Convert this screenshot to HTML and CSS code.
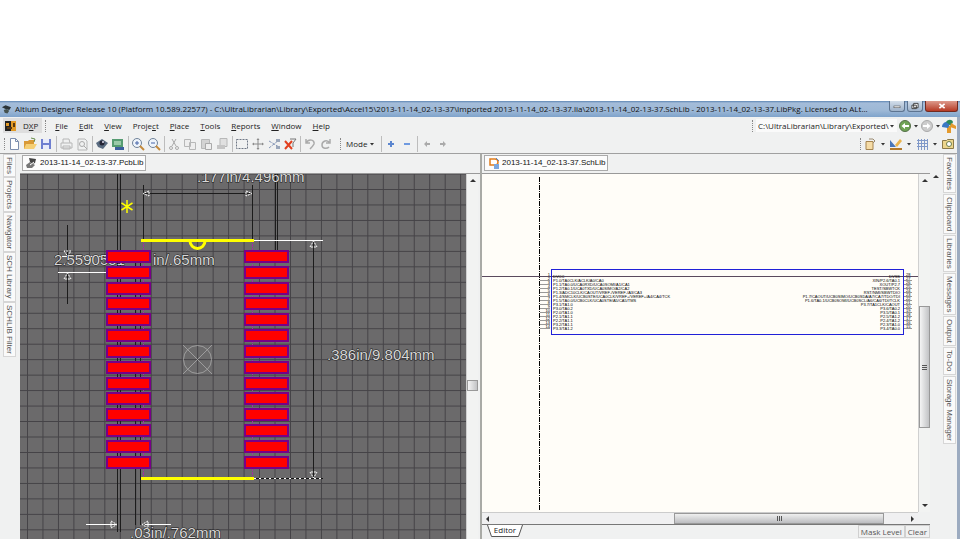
FILE: index.html
```
<!DOCTYPE html>
<html lang="en">
<head>
<meta charset="utf-8">
<title>Altium Designer Release 10</title>
<link rel="stylesheet" href="styles.css">
</head>
<body>
<svg class="defs" width="0" height="0" aria-hidden="true">
  <symbol id="caret" viewBox="0 0 6 6"><path d="M1 2h4L3 4.500z" fill="#333"/></symbol>
</svg>
<div class="window">
  <header class="titlebar">
    <svg class="appicon" viewBox="0 0 12 12"><path d="M1 4l4-2 6 2-2 3-4-1z" fill="#2c3438"/><path d="M3 7l3-1 3 2-2 3-3-1z" fill="#45524f"/></svg>
    <h1>Altium Designer Release 10 (Platform 10.589.22577) - C:\UltraLibrarian\Library\Exported\Accel15\2013-11-14_02-13-37\Imported 2013-11-14_02-13-37.lia\2013-11-14_02-13-37.SchLib - 2013-11-14_02-13-37.LibPkg. Licensed to ALt...</h1>
    <div class="controls">
      <button class="ctl" aria-label="Minimize"><svg viewBox="0 0 16 11"><rect x="4.500" y="5.500" width="7" height="2" fill="#fff" stroke="#444" stroke-width=".6"/></svg></button>
      <button class="ctl" aria-label="Restore"><svg viewBox="0 0 16 11"><path d="M6.500 2.500h5v5h-5zM4.500 4.500h5v4h-5z" fill="#fff" stroke="#333"/></svg></button>
      <button class="ctl close" aria-label="Close"><svg viewBox="0 0 16 11"><path d="M5 3l6 5M11 3L5 8" stroke="#fff" stroke-width="2"/></svg></button>
    </div>
  </header>
  <div class="frame">
    <div class="bars">
      <nav class="menubar">
        <button class="dxp"><svg viewBox="0 0 12 12"><path d="M0 1h6v10H0z" fill="#222"/><path d="M1 3h3v3H1zM6 1h5v10H6z" fill="#e29a26"/><path d="M2 7h5v2H2zM8 3h2v4H8z" fill="#5b3a10"/></svg><span>D<u>X</u>P</span></button>
        <i class="grip"></i>
        <button><u>F</u>ile</button><button><u>E</u>dit</button><button><u>V</u>iew</button><button>Proje<u>c</u>t</button><button><u>P</u>lace</button><button><u>T</u>ools</button><button><u>R</u>eports</button><button><u>W</u>indow</button><button><u>H</u>elp</button>
        <span class="space"></span>
        <i class="grip"></i>
        <label class="path"><select aria-label="Address"><option>C:\UltraLibrarian\Library\Exported\</option></select><svg class="car"><use href="#caret"/></svg></label>
        <button class="tool" aria-label="Back"><svg viewBox="0 0 14 14"><circle cx="7" cy="7" r="5.500" fill="#6fa355" stroke="#55704a"/><path d="M11 6v2H7v2L3.500 7 7 4v2z" fill="#fff"/></svg></button><svg class="car"><use href="#caret"/></svg>
        <button class="tool" aria-label="Forward"><svg viewBox="0 0 14 14"><circle cx="7" cy="7" r="5.500" fill="#ccc" stroke="#aaa"/><path d="M3 6v2h4v2l3.500-3L7 4v2z" fill="#fff"/></svg></button><svg class="car"><use href="#caret"/></svg>
        <button class="tool" aria-label="Home"><svg viewBox="0 0 14 14"><path d="M5 7h4v7H5z" fill="#e59a2c"/><path d="M0 8c0-3 2-5 5-5l3 2-2 4z" fill="#3b78c4"/><path d="M4 3c2-3 6-3 7 0L9 7z" fill="#2e8a5a"/><path d="M9 4l5 3v3l-6-2z" fill="#e59a2c"/></svg></button>
      </nav>
      <div class="toolbar">
        <i class="grip"></i>
        <button class="tool" aria-label="New"><svg viewBox="0 0 14 14"><path d="M3.500 1.500h5l3 3v8h-8z" fill="#fff" stroke="#7c8eae"/><path d="M8.500 1.500v3h3" fill="none" stroke="#7c8eae"/></svg></button>
        <button class="tool" aria-label="Open"><svg viewBox="0 0 14 14"><path d="M1 4h4l1-1h5v9H1z" fill="#d99a37"/><path d="M3 7h11l-3 5H1z" fill="#f5cf75"/><path d="M8 1l4 1-1 3" fill="none" stroke="#6a8f4b"/></svg></button>
        <button class="tool" aria-label="Save"><svg viewBox="0 0 14 14"><path d="M2 2h10v10H2z" fill="#6f7fd0"/><path d="M4 2h6v4H4zM4 8h6v4H4z" fill="#e8ebfa"/></svg></button>
        <i class="sep"></i>
        <button class="tool off" aria-label="Print"><svg viewBox="0 0 14 14"><path d="M4 6V2h6l1 4M2 6h11v5H2zM4 9h7v3H4z" fill="none" stroke="#aaa"/></svg></button>
        <button class="tool off" aria-label="Preview"><svg viewBox="0 0 14 14"><path d="M3 2h7l2 2v9H3z" fill="none" stroke="#aaa"/><circle cx="7" cy="7" r="2.500" fill="none" stroke="#999"/><path d="M9 9l3 3" stroke="#999"/></svg></button>
        <i class="sep"></i>
        <button class="tool" aria-label="View devices"><svg viewBox="0 0 14 14"><path d="M1 6l6-4 6 4-5 6-5-2z" fill="#596b80"/><circle cx="7" cy="6" r="2.500" fill="#223"/><circle cx="8" cy="5" r="1" fill="#dde"/></svg></button>
        <button class="tool" aria-label="Board"><svg viewBox="0 0 14 14"><path d="M1 2h11v8H1z" fill="#569c72"/><path d="M3 4h7v4H3z" fill="#9acaa9"/><path d="M4 10h9v3H4z" fill="#3b5f9e"/></svg></button>
        <i class="sep"></i>
        <button class="tool" aria-label="Zoom in"><svg viewBox="0 0 14 14"><circle cx="6" cy="6" r="4.500" fill="#eef4fb" stroke="#6f8299"/><path d="M4 6h4M6 4v4" stroke="#4665a8"/><path d="M9 9l4 4" stroke="#c48a3c" stroke-width="2"/></svg></button>
        <button class="tool" aria-label="Zoom out"><svg viewBox="0 0 14 14"><circle cx="6" cy="6" r="4.500" fill="#eef4fb" stroke="#6f8299"/><path d="M4 6h4" stroke="#4665a8"/><path d="M9 9l4 4" stroke="#c48a3c" stroke-width="2"/></svg></button>
        <i class="sep"></i>
        <button class="tool off" aria-label="Cut"><svg viewBox="0 0 14 14"><path d="M5 2l4 7M9 2L5 9" stroke="#999"/><circle cx="4" cy="11" r="1.500" fill="none" stroke="#999"/><circle cx="10" cy="11" r="1.500" fill="none" stroke="#999"/></svg></button>
        <button class="tool off" aria-label="Copy"><svg viewBox="0 0 14 14"><path d="M1.500 2.500h6v7h-6zM6.500 5.500h6v7h-6z" fill="#eee" stroke="#aaa"/></svg></button>
        <button class="tool off" aria-label="Paste"><svg viewBox="0 0 14 14"><path d="M2.500 2.500h8v9h-8z" fill="#ccc" stroke="#aaa"/><path d="M6.500 6.500h6v6h-6z" fill="#eee" stroke="#999"/></svg></button>
        <button class="tool off" aria-label="Rubber stamp"><svg viewBox="0 0 14 14"><path d="M5 1.500h7v8H5z" fill="#ddd" stroke="#aaa"/><path d="M2 8h8v4H2z" fill="#bbb"/></svg></button>
        <i class="sep"></i>
        <button class="tool" aria-label="Select area"><svg viewBox="0 0 14 14"><path d="M1.500 2.500h11v9h-11z" fill="none" stroke="#6f7785" stroke-dasharray="2 1"/></svg></button>
        <button class="tool" aria-label="Move"><svg viewBox="0 0 14 14"><path d="M7 2v10M2 7h10" stroke="#8a8a8a"/><path d="M7 1l1.500 2h-3zM7 13l1.500-2h-3zM1 7l2-1.500v3zM13 7l-2-1.500v3z" fill="#8a8a8a"/></svg></button>
        <button class="tool" aria-label="Deselect"><svg viewBox="0 0 14 14"><path d="M2 4l10 6M2 11l10-8" stroke="#8798b8" stroke-dasharray="3 1"/><path d="M9 2h4v3H9zM9 9h4v3H9z" fill="#9aa6ba"/></svg></button>
        <button class="tool" aria-label="Clear filter"><svg viewBox="0 0 14 14"><path d="M2 4l7 8M9 4l-7 8" stroke="#e2401f" stroke-width="2"/><path d="M7 2h6L10 6v4" fill="none" stroke="#777"/></svg></button>
        <i class="sep"></i>
        <button class="tool off" aria-label="Undo"><svg viewBox="0 0 14 14"><path d="M3 2v4h4M3 6c3-5 9-3 8 1-1 2-2 3-4 5" fill="none" stroke="#999" stroke-width="1.500"/></svg></button>
        <button class="tool off" aria-label="Redo"><svg viewBox="0 0 14 14"><path d="M11 2v4H7M11 6C8 2 3 4 3 8s5 4 7 2" fill="none" stroke="#999" stroke-width="1.500"/></svg></button>
        <i class="grip"></i>
        <button class="mode">Mode<svg class="car"><use href="#caret"/></svg></button>
        <i class="sep"></i>
        <button class="tool" aria-label="Add"><svg viewBox="0 0 14 14"><path d="M7 4v6M4 7h6" stroke="#5b86cf" stroke-width="2"/></svg></button>
        <button class="tool" aria-label="Remove"><svg viewBox="0 0 14 14"><path d="M4 7h6" stroke="#6f9ae0" stroke-width="2"/></svg></button>
        <i class="sep"></i>
        <button class="tool" aria-label="Previous"><svg viewBox="0 0 14 14"><path d="M4 7l3-3v2h3v2H7v2z" fill="#aaa"/></svg></button>
        <button class="tool" aria-label="Next"><svg viewBox="0 0 14 14"><path d="M10 7L7 4v2H4v2h3v2z" fill="#aaa"/></svg></button>
        <span class="space"></span>
        <i class="grip"></i>
        <button class="tool" aria-label="Place part"><svg viewBox="0 0 14 14"><path d="M3 4.500h7v8H3z" fill="#f6dca6" stroke="#a58450"/><path d="M6 2h4l2 2-2 2" fill="none" stroke="#9a8a70"/></svg></button><svg class="car"><use href="#caret"/></svg>
        <button class="tool" aria-label="Draw"><svg viewBox="0 0 14 14"><path d="M1 3l6 7H1z" fill="#4876b8"/><path d="M6 8l5-6 2 2-5 6z" fill="#e9b44d"/><path d="M1 12h12" stroke="#b37a2a" stroke-width="2"/></svg></button><svg class="car"><use href="#caret"/></svg>
        <button class="tool" aria-label="Grid"><svg viewBox="0 0 14 14"><path d="M2 3.500h11M2 6.500h11M2 9.500h11M3.500 2v11M6.500 2v11M9.500 2v11M12.500 2v11" stroke="#7f98c8"/></svg></button><svg class="car"><use href="#caret"/></svg>
        <button class="tool" aria-label="Model manager"><svg viewBox="0 0 14 14"><path d="M1.500 3.500h4l1-1h6v9h-11z" fill="#ecd58c" stroke="#8c7a48"/><circle cx="8" cy="7" r="2.500" fill="#fff" stroke="#6b7d4a"/></svg></button>
      </div>
    </div>
    <main class="workspace">
      <aside class="dock left">
        <button>Files</button><button>Projects</button><button>Navigator</button><button>SCH Library</button><button>SCHLIB Filter</button>
      </aside>
      <section class="doc pcbdoc">
        <div class="tabs"><button class="tab"><svg viewBox="0 0 12 12"><path d="M3 1l7 1-1 4-3 1-2-2z" fill="#444"/><path d="M0 8l4-3 5 3-3 3H1z" fill="#777"/><path d="M4 8l4-3" stroke="#fff"/></svg>2013-11-14_02-13-37.PcbLib</button></div>
        <div class="view">
          <svg class="pcb" viewBox="20 174 446 365" preserveAspectRatio="xMinYMin slice" role="img" aria-label="Footprint">
            <defs>
              <pattern id="grid" x="27" y="189" width="15.470" height="15.470" patternUnits="userSpaceOnUse"><path d="M.5 0v15.500M0 .5h15.500" stroke="#444246"/></pattern>
              <g id="pads"><path d="M1 1h43v11H1zM1 17h43v11H1zM1 33h43v11H1zM1 48h43v11H1zM1 64h43v11H1zM1 80h43v11H1zM1 96h43v11H1zM1 112h43v11H1zM1 128h43v11H1zM1 143h43v11H1zM1 159h43v11H1zM1 175h43v11H1zM1 191h43v11H1zM1 207h43v11H1z" fill="#f00" stroke="#780088" stroke-width="2"/></g>
            </defs>
            <rect x="20" y="174" width="1000" height="800" fill="#6b6a6b"/>
            <rect x="20" y="174" width="1000" height="800" fill="url(#grid)"/>
            <path d="M117.500 174v358M120.500 174v358M135.500 250v275M140.500 250v275M143.500 185v55M252.500 185v55M275.500 174v76M277.500 174v76M67.500 225v32M67.500 273v31M313.500 241v236M143 193.500h109" stroke="#1c1c1c" fill="none"/>
            <path d="M143.500 240v238M252.500 240v238" stroke="#a030a0" stroke-dasharray="3 1"/>
            <path d="M254 240.500h69M58 272.500h48M86 524.500h30M145 524.500h26" stroke="#fff"/>
            <path d="M62 256.500h44" stroke="#fff" stroke-dasharray="5 2"/>
            <path d="M254 478.500h69" stroke="#111"/><path d="M254 478.500h69" stroke="#fff" stroke-dasharray="2 3"/>
            <path d="M149 191l-6 2.500 6 2.500zM246 191l6 2.500-6 2.500zM64 251l3.500 5 3.500-5zM64 279l3.500-6 3.500 6zM310 247l3.500-6 3.500 6zM310 472l3.500 6 3.500-6zM111 521l6 3.500-6 3.500zM148 521l-6 3.500 6 3.500z" fill="none" stroke="#fff" stroke-dasharray="2 1"/>
            <g class="dims">
              <text x="197" y="182">.177in/4.496mm</text>
              <text x="54" y="265">2.5590551</text>
              <text x="153" y="265">in/.65mm</text>
              <text x="327" y="360">.386in/9.804mm</text>
              <text x="130" y="538">.03in/.762mm</text>
            </g>
            <use href="#pads" x="106" y="250"/><use href="#pads" x="244" y="250"/>
            <path d="M141 240.500h113M141 478.500h113M190 241a7 7 0 0 0 15 0" stroke="#ff0" stroke-width="3" fill="none"/>
            <path d="M127 200v13M121.500 203l11 7M132.500 203l-11 7" stroke="#ff0" stroke-width="1.500"/>
            <path d="M183 345l29 29M212 345l-29 29" stroke="#aaa" stroke-width=".8"/><circle cx="197.500" cy="359.500" r="14" fill="none" stroke="#aaa" stroke-width=".8"/>
          </svg>
          <div class="vscroll"><i class="up"></i><i class="thumb"></i></div>
        </div>
      </section>
      <section class="doc schdoc">
        <div class="tabs"><button class="tab"><svg viewBox="0 0 12 12"><path d="M2 2h5a3 3 0 0 1 0 6H2z" fill="#fff" stroke="#e07c1c" stroke-width="1.500"/><path d="M6 7h5v5H6z" fill="#7ba6dd"/><path d="M8 1l3 3" stroke="#5a86c4"/></svg>2013-11-14_02-13-37.SchLib</button></div>
        <div class="view">
          <svg class="sch" viewBox="482 174 437 338" preserveAspectRatio="xMinYMin slice" role="img" aria-label="Symbol">
            <path d="M539.500 177v334" stroke="#000" stroke-dasharray="5 1 1 1"/>
            <path d="M482 276.500h437" stroke="#5a4a5e"/>
            <rect x="551.500" y="269.500" width="352" height="65" fill="none" stroke="#2020d8"/>
            <path d="M540 280.500h10M540 284.500h10M540 288.500h10M540 292.500h10M540 296.500h10M540 300.500h10M540 304.500h10M540 308.500h10M540 312.500h10M540 316.500h10M540 320.500h10M540 324.500h10M540 328.500h10M904 280.500h8M904 284.500h8M904 288.500h8M904 292.500h8M904 296.500h8M904 300.500h8M904 304.500h8M904 308.500h8M904 312.500h8M904 316.500h8M904 320.500h8M904 324.500h8M904 328.500h8" stroke="#555" stroke-width=".6"/>
            <g class="pins">
              <text x="553" y="278">DVCC</text><text x="553" y="282">P1.0/TA0CLK/ACLK/A0/CA0</text><text x="553" y="286">P1.1/TA0.0/UCA0RXD/UCA0SOMI/A1/CA1</text><text x="553" y="290">P1.2/TA0.1/UCA0TXD/UCA0SIMO/A2/CA2</text><text x="553" y="294">P1.3/ADC10CLK/CAOUT/VREF-/VEREF-/A3/CA3</text><text x="553" y="298">P1.4/SMCLK/UCB0STE/UCA0CLK/VREF+/VEREF+/A4/CA4/TCK</text><text x="553" y="302">P1.5/TA0.0/UCB0CLK/UCA0STE/A5/CA5/TMS</text><text x="553" y="306">P3.1/TA1.0</text><text x="553" y="310">P3.0/TA0.2</text><text x="553" y="314">P2.0/TA1.0</text><text x="553" y="318">P2.1/TA1.1</text><text x="553" y="322">P2.2/TA1.1</text><text x="553" y="326">P3.2/TA1.1</text><text x="553" y="330">P3.3/TA1.2</text>
            </g>
            <g class="pins end">
              <text x="900" y="278">DVSS</text><text x="900" y="282">XIN/P2.6/TA0.1</text><text x="900" y="286">XOUT/P2.7</text><text x="900" y="290">TEST/SBWTCK</text><text x="900" y="294">RST/NMI/SBWTDIO</text><text x="900" y="298">P1.7/CAOUT/UCB0SIMO/UCB0SDA/A7/CA7/TDO/TDI</text><text x="900" y="302">P1.6/TA0.1/UCB0SOMI/UCB0SCL/A6/CA6/TDI/TCLK</text><text x="900" y="306">P3.7/TA1CLK/CAOUT</text><text x="900" y="310">P3.6/TA0.2</text><text x="900" y="314">P3.5/TA0.1</text><text x="900" y="318">P2.5/TA1.2</text><text x="900" y="322">P2.4/TA1.2</text><text x="900" y="326">P2.3/TA1.0</text><text x="900" y="330">P3.4/TA0.0</text>
            </g>
            <g class="pins end">
              <text x="550" y="276">1</text><text x="550" y="280">2</text><text x="550" y="284">3</text><text x="550" y="288">4</text><text x="550" y="292">5</text><text x="550" y="296">6</text><text x="550" y="300">7</text><text x="550" y="304">8</text><text x="550" y="308">9</text><text x="550" y="312">10</text><text x="550" y="316">11</text><text x="550" y="320">12</text><text x="550" y="324">13</text><text x="550" y="328">14</text>
            </g>
            <g class="pins">
              <text x="906" y="276">28</text><text x="906" y="280">27</text><text x="906" y="284">26</text><text x="906" y="288">25</text><text x="906" y="292">24</text><text x="906" y="296">23</text><text x="906" y="300">22</text><text x="906" y="304">21</text><text x="906" y="308">20</text><text x="906" y="312">19</text><text x="906" y="316">18</text><text x="906" y="320">17</text><text x="906" y="324">16</text><text x="906" y="328">15</text>
            </g>
          </svg>
          <div class="vscroll"><i class="up"></i><i class="thumb"></i><i class="down"></i></div>
        </div>
        <div class="hscroll"><i class="lt"></i><i class="thumb"></i><i class="rt"></i></div>
        <footer class="status">
          <button class="editor"><svg viewBox="0 0 36 12" preserveAspectRatio="none"><path d="M.5 0l4 11.500h27L35.500 0" fill="#fff" stroke="#555"/></svg><span>Editor</span></button>
          <span class="space"></span>
          <button class="flat">Mask Level</button><button class="flat">Clear</button>
        </footer>
      </section>
      <div class="strip"><i class="up"></i></div>
      <aside class="dock right">
        <button>Favorites</button><button>Clipboard</button><button>Libraries</button><button>Messages</button><button>Output</button><button>To-Do</button><button>Storage Manager</button>
      </aside>
    </main>
  </div>
</div>
</body>
</html>
```
FILE: styles.css
```
* { box-sizing: border-box; }
body {
  margin: 0;
  background: #fff;
  color: #222;
  font: 8px/10px "Open Sans", "Liberation Sans", sans-serif;
}
button, select {
  font: inherit;
  color: inherit;
  background: none;
  border: 0;
  padding: 0;
  margin: 0;
}
.defs { position: absolute; }
.window {
  height: 100vh;
  padding-top: 101px;
  display: flex;
  flex-direction: column;
}
.space { flex: 1; }

.titlebar {
  flex: none;
  height: 16px;
  display: flex;
  align-items: center;
  padding-left: 1px;
  background: linear-gradient(#5d86b4 0, #a4bcd9 2px, #9db8d6 60%, #7fa3cb);
}
.appicon { width: 11px; height: 12px; margin-right: 3px; flex: none; }
.titlebar h1 {
  flex: 1;
  min-width: 0;
  margin: 0;
  font: 8px/14px "Open Sans", "Liberation Sans", sans-serif;
  color: #111;
  white-space: nowrap;
}
.controls { display: flex; gap: 2px; align-self: flex-start; padding-right: 2px; }
.ctl {
  width: 16px;
  height: 11px;
  border: 1px solid #5d7490;
  border-top: 0;
  border-radius: 0 0 3px 3px;
  background: linear-gradient(#d3deea, #9fb3cb);
}
.ctl svg { display: block; width: 14px; height: 10px; margin: auto; }
.ctl.close { width: 33px; background: linear-gradient(#dd9a8c, #b63a25); border-color: #712a20; }

.frame {
  flex: 1;
  min-height: 0;
  display: flex;
  flex-direction: column;
  background: #f0f1f1;
  border-right: 3px solid #9cabc0;
}
.menubar, .toolbar { display: flex; align-items: center; }
.menubar { height: 17px; padding-left: 3px; }
.toolbar { height: 20px; padding: 0 1px 0 2px; border-bottom: 1px solid #a0a0a0; }
.menubar > button { padding: 0 5px 0 6px; }
.menubar > .dxp { display: flex; align-items: center; gap: 6px; padding: 0 4px 0 2px; background: #dedede; height: 15px; }
.dxp svg { width: 12px; height: 12px; }
.grip { width: 1px; height: 12px; margin: 0 1px 0 2px; border-left: 1px dotted #888; }
.menubar > .grip { margin: 0 3px; }
.sep { width: 1px; height: 16px; margin: 0 1px 0 2px; background: #bdbdbd; }
.tool, .menubar > .tool { width: 16px; height: 16px; padding: 1px; }
.tool svg { display: block; width: 14px; height: 14px; }
.off { opacity: .8; }
.car { width: 6px; height: 6px; flex: none; }
.toolbar > .car { margin: 0 2px; }
.mode { display: flex; align-items: center; gap: 2px; padding: 0 4px; }
.path { display: flex; align-items: center; background: #fafafa; padding: 0 2px; }
.path select { appearance: none; height: 13px; line-height: 13px; }
.toolbar .grip ~ .grip { margin-left: 6px; }

.workspace {
  flex: 1;
  min-height: 0;
  display: grid;
  grid-template-columns: 20px minmax(0, 462fr) minmax(0, 448fr) 12px 15px;
  grid-template-rows: minmax(0, 1fr);
}
.dock { display: flex; flex-direction: column; gap: 1px; align-items: flex-start; }
.dock button {
  writing-mode: vertical-rl;
  width: 13px;
  font: 8px/12px "Liberation Sans", sans-serif;
  padding: 2px 0;
  border: 1px solid #d6d6d6;
  background: #fafafa;
  color: #555;
}
.dock.left { padding-left: 3px; gap: 0; }
.dock.right { align-items: flex-end; padding-right: 1px; }
.strip { display: flex; justify-content: center; align-items: flex-start; padding-top: 21px; }
.doc { display: flex; flex-direction: column; min-height: 0; }
.tabs { height: 20px; padding: 1px 2px 2px; border-bottom: 1px solid #999; flex: none; }
.tab {
  display: flex;
  align-items: center;
  gap: 2px;
  height: 16px;
  padding: 0 2px 0 3px;
  background: #fcfcfc;
  border: 1px solid #aaa;
  font: 8px/10px "Liberation Sans", sans-serif;
  color: #111;
}
.tab svg { width: 12px; height: 12px; }
.view { flex: 1; min-height: 0; display: flex; }
.view > svg { flex: 1; min-width: 0; width: 0; height: 100%; display: block; }
.pcbdoc { border-right: 2px solid #a9aaa6; }
.pcbdoc .view { padding-right: 2px; }
.sch { background: #fffdf8; }
.dims { font: 15px "Liberation Sans", sans-serif; fill: #d8d8d8; stroke: #1c1c1c; stroke-width: 1px; paint-order: stroke; }
.pins { font: 4px "Liberation Sans", sans-serif; fill: #000; }
.end { text-anchor: end; }

.vscroll {
  width: 12px;
  display: flex;
  flex-direction: column;
  align-items: center;
  background: #f2f3f2;
  border-left: 1px solid #d0d0d0;
  padding: 5px 0;
}
.up, .down, .lt, .rt { border: 3px solid transparent; flex: none; }
.up { border-top: 0; border-bottom-color: #333; }
.down { border-bottom: 0; border-top-color: #333; }
.lt { border-left: 0; border-right-color: #333; }
.rt { border-right: 0; border-left-color: #333; }
.thumb { border: 1px solid #999; background: linear-gradient(90deg, #f4f4f4, #c2c3c5); position: relative; }
.pcbdoc .thumb { width: 11px; height: 11px; margin-top: 198px; }
.schdoc .vscroll .up { margin-bottom: 124px; }
.schdoc .vscroll .thumb { width: 11px; flex: 1; }
.schdoc .vscroll .down { margin-top: 76px; }
.hscroll {
  height: 12px;
  flex: none;
  display: flex;
  align-items: center;
  margin-right: 12px;
  padding: 0 4px;
  background: #f0f0f1;
  border-top: 1px solid #ccc;
}
.hscroll .thumb { height: 11px; flex: 1; background: linear-gradient(#efefef, #bcbdc0); }
.hscroll .lt { margin-right: 185px; }
.hscroll .rt { margin-left: 27px; }
.schdoc .thumb::after {
  content: "";
  position: absolute;
  inset: 0;
  margin: auto;
  width: 5px;
  height: 5px;
  background: repeating-linear-gradient(#555 0 1px, transparent 1px 2px);
}
.schdoc .hscroll .thumb::after { background: repeating-linear-gradient(90deg, #555 0 1px, transparent 1px 2px); }
.status {
  height: 15px;
  flex: none;
  display: flex;
  align-items: flex-start;
  border-top: 1px solid #777;
}
.editor { display: grid; width: 36px; height: 12px; margin-left: 5px; }
.editor > * { grid-area: 1 / 1; }
.editor svg { width: 36px; height: 12px; }
.editor span { line-height: 10px; }
.flat { height: 13px; padding: 0 2px; border: 1px solid #d0d0d0; color: #555; }
```
